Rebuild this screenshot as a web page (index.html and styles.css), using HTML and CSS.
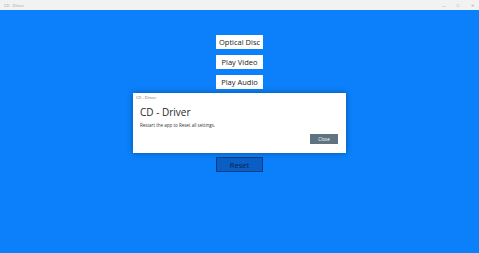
FILE: index.html
```html
<!DOCTYPE html>
<html>

<head>
    <title>CD - Driver</title>
    <link rel="stylesheet" href="styles.css">
</head>

<body>

    <!-- Window title bar -->
    <div class="titlebar">
        <span class="app-title">CD - Driver</span>
        <div class="caption-buttons">
            <span class="caption">&#8212;</span>
            <span class="caption">&#9633;</span>
            <span class="caption">&#10005;</span>
        </div>
    </div>

    <!-- Main content -->
    <div class="main">
        <button class="menu-button">Optical Disc</button>
        <button class="menu-button">Play Video</button>
        <button class="menu-button">Play Audio</button>
        <button class="reset-button">Reset</button>
    </div>

    <!-- Dialog -->
    <div class="overlay">
        <div class="dialog">
            <div class="dialog-caption">CD - Driver</div>
            <div class="dialog-body">
                <h1>CD - Driver</h1>
                <p>Restart the app to Reset all settings.</p>
            </div>
            <div class="dialog-footer">
                <button class="close-button">Close</button>
            </div>
        </div>
    </div>

</body>

</html>
```

FILE: styles.css
```css
/* Page */
body {
    margin: 0;
    width: 479px;
    height: 253px;
    background-color: #0b80fa;
    font-family: "Open Sans", "Noto Sans", sans-serif;
    overflow: hidden;
}

/* Title bar */
.titlebar {
    height: 10px;
    background-color: #f2f2f2;
    display: flex;
    justify-content: space-between;
    align-items: center;
    padding-left: 4px;
}

.app-title {
    font-size: 4px;
    color: #9a9a9a;
}

.caption-buttons {
    display: flex;
    height: 100%;
}

.caption {
    width: 14px;
    font-size: 4px;
    color: #9a9a9a;
    display: flex;
    justify-content: center;
    align-items: center;
}

/* Menu buttons */
.main {
    display: flex;
    flex-direction: column;
    align-items: center;
    padding-top: 25px;
    gap: 6px;
}

.menu-button {
    width: 47px;
    height: 14px;
    margin: 0;
    padding: 0;
    border: none;
    background-color: #ffffff;
    color: #1a1a1a;
    font-family: inherit;
    font-size: 7.5px;
}

.reset-button {
    width: 47px;
    height: 15px;
    margin: 62px 0 0;
    padding: 0;
    border: 1px solid #073f86;
    background-color: #0b5ec4;
    color: #0a2550;
    font-family: inherit;
    font-size: 7.5px;
}

/* Dialog */
.overlay {
    position: absolute;
    left: 0;
    top: 0;
    width: 100%;
    height: 100%;
}

.dialog {
    position: absolute;
    left: 133px;
    top: 93px;
    width: 213px;
    height: 60px;
    background-color: #ffffff;
    box-shadow: 0 0 6px rgba(0, 0, 0, 0.35);
    display: flex;
    flex-direction: column;
}

.dialog-caption {
    font-size: 4px;
    color: #666666;
    padding: 2px 0 0 3px;
    height: 6px;
}

.dialog-body {
    padding: 0 7px;
}

.dialog-body h1 {
    margin: 4px 0 0;
    font-size: 10px;
    font-weight: normal;
    color: #1f1f1f;
}

.dialog-body p {
    margin: 3px 0 0;
    font-size: 4.5px;
    color: #333333;
}

.dialog-footer {
    display: flex;
    justify-content: flex-end;
    padding: 6px 8px 0;
}

.close-button {
    width: 28px;
    height: 10px;
    margin: 0;
    padding: 0;
    border: none;
    background-color: #5f7380;
    color: #ffffff;
    font-family: inherit;
    font-size: 4.5px;
}
```
